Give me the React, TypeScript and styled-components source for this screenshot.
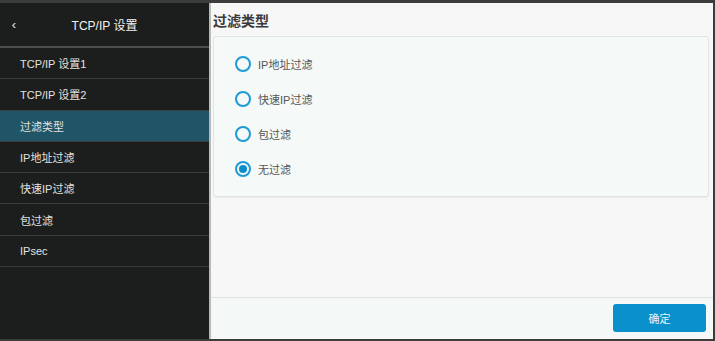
import React, { useState } from "react";
import styled, { createGlobalStyle } from "styled-components";

const GlobalStyle = createGlobalStyle`
  html, body {
    margin: 0;
    padding: 0;
    background: #1b1e1c;
  }
  body {
    font-family: "Liberation Sans", "Noto Sans CJK SC", sans-serif;
  }
`;

const Frame = styled.div`
  width: 715px;
  height: 341px;
  box-sizing: border-box;
  display: flex;
  border-top: 3px solid #3b3d3c;
  border-right: 2px solid #3b3d3c;
  border-bottom: 2px solid #3b3d3c;
  overflow: hidden;
`;

const Sidebar = styled.nav`
  width: 209px;
  flex-shrink: 0;
  background: #1b1e1c;
  border-right: 2px solid #b8bab9;
  display: flex;
  flex-direction: column;
`;

const SideHeader = styled.div`
  height: 43px;
  display: flex;
  align-items: center;
  border-bottom: 2px solid #4b4e4c;
  color: #f2f2f2;
  font-size: 12px;
`;

const Back = styled.span`
  width: 28px;
  text-align: center;
  font-size: 13px;
  color: #e6e6e6;
`;

const HeaderTitle = styled.span`
  flex: 1;
  text-align: center;
  padding-right: 28px;
`;

const NavItem = styled.div<{ $active?: boolean }>`
  height: 31.3px;
  box-sizing: border-box;
  display: flex;
  align-items: center;
  padding-left: 20px;
  font-size: 11px;
  color: #e2e2e2;
  background: ${(p) => (p.$active ? "#1f5566" : "transparent")};
  border-bottom: 1px solid #3a3d3b;
`;

const Main = styled.main`
  flex: 1;
  display: flex;
  flex-direction: column;
  background: #f7f7f7;
`;

const Body = styled.div`
  flex: 1;
  padding: 0 4px 0 2px;
`;

const Title = styled.h2`
  margin: 0;
  height: 33px;
  display: flex;
  align-items: center;
  font-size: 14px;
  font-weight: 600;
  color: #3a3a3a;
`;

const Card = styled.div`
  height: 161px;
  box-sizing: border-box;
  background: #f5f9f7;
  border: 1px solid #e1e4e2;
  border-radius: 3px;
  box-shadow: 0 1px 1px rgba(0, 0, 0, 0.05);
  padding: 9px 0 0 21px;
  display: flex;
  flex-direction: column;
`;

const Option = styled.label`
  height: 35px;
  display: flex;
  align-items: center;
  gap: 7px;
  font-size: 11px;
  color: #555;
  cursor: pointer;
`;

const Radio = styled.span<{ $checked?: boolean }>`
  width: 16px;
  height: 16px;
  box-sizing: border-box;
  border-radius: 50%;
  border: 2px solid #1e9bd6;
  display: flex;
  align-items: center;
  justify-content: center;
  &::after {
    content: "";
    width: 8px;
    height: 8px;
    border-radius: 50%;
    background: ${(p) => (p.$checked ? "#0a8ecb" : "transparent")};
  }
`;

const Footer = styled.footer`
  height: 42px;
  box-sizing: border-box;
  border-top: 1px solid #dfe2e0;
  background: #f4f9f7;
  display: flex;
  align-items: flex-start;
  justify-content: flex-end;
  padding: 6px 7px 0 0;
`;

const ConfirmButton = styled.button`
  width: 93px;
  height: 28px;
  border: none;
  border-radius: 3px;
  background: #0a90ca;
  color: #e8f4fa;
  font-family: inherit;
  font-size: 11px;
`;

const navItems = [
  "TCP/IP 设置1",
  "TCP/IP 设置2",
  "过滤类型",
  "IP地址过滤",
  "快速IP过滤",
  "包过滤",
  "IPsec",
];

const options = ["IP地址过滤", "快速IP过滤", "包过滤", "无过滤"];

function App() {
  const [selected, setSelected] = useState("无过滤");
  return (
    <>
      <GlobalStyle />
      <Frame>
        <Sidebar>
          <SideHeader>
            <Back>‹</Back>
            <HeaderTitle>TCP/IP 设置</HeaderTitle>
          </SideHeader>
          {navItems.map((item) => (
            <NavItem key={item} $active={item === "过滤类型"}>
              {item}
            </NavItem>
          ))}
        </Sidebar>
        <Main>
          <Body>
            <Title>过滤类型</Title>
            <Card>
              {options.map((opt) => (
                <Option key={opt} onClick={() => setSelected(opt)}>
                  <Radio $checked={selected === opt} />
                  {opt}
                </Option>
              ))}
            </Card>
          </Body>
          <Footer>
            <ConfirmButton>确定</ConfirmButton>
          </Footer>
        </Main>
      </Frame>
    </>
  );
}

export default App;
